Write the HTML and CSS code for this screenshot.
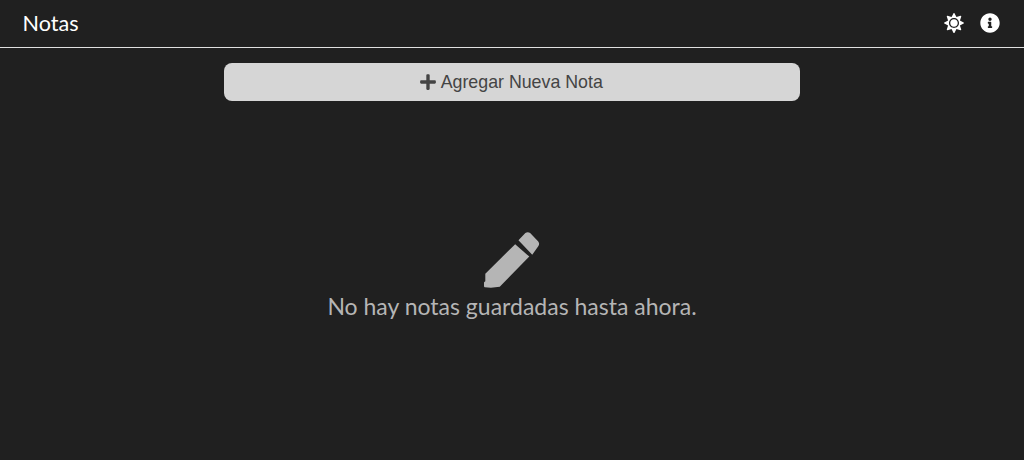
FILE: index.html
```html
<!DOCTYPE html>
<html lang="es">
<head>
    <meta charset="UTF-8">
    <title>Notas</title>
    <link rel="stylesheet" href="styles.css">
</head>
<body>
    <header class="header">
        <h1 class="title">Notas</h1>
        <div class="actions">
            <svg class="icon" viewBox="0 0 512 512"><path d="M256 160c-52.9 0-96 43.1-96 96s43.1 96 96 96 96-43.1 96-96-43.1-96-96-96zm246.4 80.5l-94.7-47.3 33.5-100.4c4.5-13.6-8.4-26.5-21.9-21.9l-100.4 33.5-47.4-94.8c-6.4-12.8-24.6-12.8-31 0l-47.3 94.7L92.7 70.8c-13.6-4.5-26.5 8.4-21.9 21.9l33.5 100.4-94.7 47.4c-12.8 6.4-12.8 24.6 0 31l94.7 47.3-33.5 100.5c-4.5 13.6 8.4 26.5 21.9 21.9l100.4-33.5 47.3 94.7c6.4 12.8 24.6 12.8 31 0l47.3-94.7 100.4 33.5c13.6 4.5 26.5-8.4 21.9-21.9l-33.5-100.4 94.7-47.3c13-6.5 13-24.7.2-31.1zm-155.9 106c-49.9 49.9-131.1 49.9-181 0-49.9-49.9-49.9-131.1 0-181 49.9-49.9 131.1-49.9 181 0 49.9 49.9 49.9 131.1 0 181z"/></svg>
            <svg class="icon" viewBox="0 0 512 512"><path d="M256 8C119.043 8 8 119.083 8 256c0 136.997 111.043 248 248 248s248-111.003 248-248C504 119.083 392.957 8 256 8zm0 110c23.196 0 42 18.804 42 42s-18.804 42-42 42-42-18.804-42-42 18.804-42 42-42zm56 254c0 6.627-5.373 12-12 12h-88c-6.627 0-12-5.373-12-12v-24c0-6.627 5.373-12 12-12h12v-64h-12c-6.627 0-12-5.373-12-12v-24c0-6.627 5.373-12 12-12h64c6.627 0 12 5.373 12 12v100h12c6.627 0 12 5.373 12 12v24z"/></svg>
        </div>
    </header>

    <main class="content">
        <button class="add-button">
            <svg class="plus" viewBox="0 0 448 512"><path d="M416 208H272V64c0-17.67-14.33-32-32-32h-32c-17.67 0-32 14.33-32 32v144H32c-17.67 0-32 14.33-32 32v32c0 17.67 14.33 32 32 32h144v144c0 17.67 14.33 32 32 32h32c17.67 0 32-14.33 32-32V304h144c17.67 0 32-14.33 32-32v-32c0-17.67-14.33-32-32-32z"/></svg>
            Agregar Nueva Nota
        </button>

        <div class="empty">
            <svg class="pencil" viewBox="0 0 512 512"><path d="M315 75L378 10Q400 -6 422 10L496 86Q512 108 496 130L441 207ZM285 111L414 225 144 501 63 510 8 506Q0 504 0 494L0 462Q0 456 12 450L12 381Z"/></svg>
            <p class="empty-text">No hay notas guardadas hasta ahora.</p>
        </div>
    </main>
</body>
</html>
```

FILE: styles.css
```css
body{
    margin: 0;
    height: 460px;
    overflow: hidden;
    font-family: "Lato", sans-serif;
    background-color: #202020;
    color: white;
}
.header{
    display: flex;
    justify-content: space-between;
    align-items: center;
    height: 47px;
    padding: 0 24px 0 22.5px;
    border-bottom: 1px solid #e0e0e0;
}
.title{
    margin: 0 0 2px;
    font-size: 21.6px;
    font-weight: 400;
}
.actions{
    display: flex;
    gap: 16px;
    margin-bottom: 1px;
}
.icon{
    width: 20px;
    height: 20px;
    fill: white;
}
.content{
    display: flex;
    flex-direction: column;
    align-items: center;
    padding-top: 15px;
}
.add-button{
    display: flex;
    justify-content: center;
    align-items: center;
    gap: 5px;
    box-sizing: border-box;
    width: 576px;
    height: 38px;
    padding: 0 1.5px 0 0;
    border: none;
    border-radius: 8px;
    background-color: #d6d6d6;
    color: #444444;
    font-family: "Liberation Sans", sans-serif;
    font-size: 17.8px;
}
.plus{
    width: 16px;
    height: 18px;
    fill: #444444;
}
.empty{
    display: flex;
    flex-direction: column;
    align-items: center;
    margin-top: 131px;
    color: #b5b5b5;
}
.pencil{
    width: 56px;
    height: 56px;
    fill: #b5b5b5;
}
.empty-text{
    margin: 4px 0 0;
    font-size: 23px;
}
```
